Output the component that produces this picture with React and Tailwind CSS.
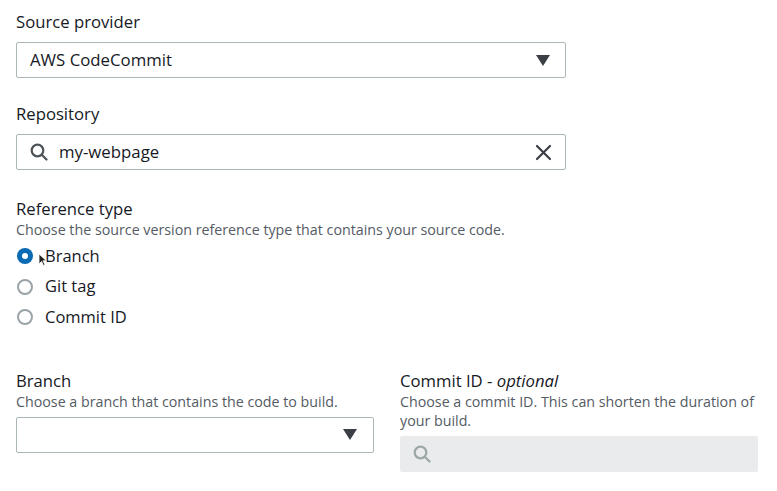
import React from "react";

const font = { fontFamily: '"Open Sans", "Noto Sans", sans-serif' };

const Caret = () => (
  <svg width="14" height="11" viewBox="0 0 14 11" className="shrink-0">
    <path d="M0 0 H14 L7 11 Z" fill="#3b3f45" />
  </svg>
);

const SearchIcon = ({ color = "#545b64" }) => (
  <svg width="18" height="18" viewBox="0 0 18 18" fill="none" stroke={color} strokeWidth="2.2" strokeLinecap="round">
    <circle cx="7.5" cy="7.5" r="5.8" />
    <path d="M11.8 11.8 L16.5 16.5" />
  </svg>
);

const ClearIcon = () => (
  <svg width="17" height="17" viewBox="0 0 17 17" stroke="#3b3f45" strokeWidth="2.2" strokeLinecap="round">
    <path d="M2 2 L15 15 M15 2 L2 15" />
  </svg>
);

const Cursor = () => (
  <svg width="9" height="13" viewBox="0 0 9 13" className="absolute left-[38px] top-[253px]">
    <path d="M1 1 V11 L3.5 8.5 L5.5 12.5 L7 11.8 L5 7.8 H8.5 Z" fill="#222" stroke="#fff" strokeWidth="0.8" />
  </svg>
);

const Radio = ({ label, checked }) => (
  <label className="flex items-center h-[30.5px]">
    {checked ? (
      <span className="w-4 h-4 rounded-full bg-[#0a6ab4] flex items-center justify-center ml-[1px]">
        <span className="w-[6px] h-[6px] rounded-full bg-white" />
      </span>
    ) : (
      <span className="w-4 h-4 rounded-full border-2 border-[#9aa4a8] bg-white ml-[1px]" />
    )}
    <span className="ml-[12px] text-[16.5px] text-[#16191f]">{label}</span>
  </label>
);

export default function App() {
  return (
    <div className="relative w-[777px] h-[491px] bg-white pl-4 pr-[19px] pt-[9px]" style={font}>
      <div className="w-[550px]">
        <div className="text-[16.7px] leading-[26px] text-[#16191f]">Source provider</div>
        <div className="mt-[7px] h-9 border border-[#aab7b8] rounded-[2px] flex items-center justify-between pl-[13px] pr-[15px]">
          <span className="text-[16.8px] font-medium text-[#16191f]">AWS CodeCommit</span>
          <Caret />
        </div>

        <div className="mt-[23px] text-[16.7px] leading-[26px] text-[#16191f]">Repository</div>
        <div className="mt-[7px] h-9 border border-[#aab7b8] rounded-[2px] flex items-center pl-[13px] pr-[13px]">
          <SearchIcon color="#4d5359" />
          <span className="ml-[11px] text-[16.8px] font-medium text-[#16191f]">my-webpage</span>
          <span className="ml-auto flex"><ClearIcon /></span>
        </div>
      </div>

      <div className="mt-[27px] text-[16.7px] leading-[24px] text-[#16191f]">Reference type</div>
      <div className="text-[14.25px] leading-[18px] text-[#545b64]">
        Choose the source version reference type that contains your source code.
      </div>
      <div className="mt-[2px] flex flex-col">
        <Radio label="Branch" checked />
        <Radio label="Git tag" />
        <Radio label="Commit ID" />
      </div>

      <div className="mt-[37px] grid grid-cols-2 gap-[26px]">
        <div>
          <div className="text-[16.7px] leading-[22px] text-[#16191f]">Branch</div>
          <div className="text-[14.25px] leading-[19px] text-[#545b64]">Choose a branch that contains the code to build.</div>
          <div className="mt-[6px] h-9 border border-[#aab7b8] rounded-[2px] flex items-center justify-end pr-[16px]">
            <Caret />
          </div>
        </div>
        <div>
          <div className="text-[16.7px] leading-[22px] text-[#16191f]">
            Commit ID - <span className="italic">optional</span>
          </div>
          <div className="text-[14.25px] leading-[19px] text-[#545b64]">
            Choose a commit ID. This can shorten the duration of your build.
          </div>
          <div className="mt-[6px] h-9 bg-[#e9ebed] rounded-[2px] flex items-center pl-[13px]">
            <SearchIcon color="#9ba7a6" />
          </div>
        </div>
      </div>
      <Cursor />
    </div>
  );
}
